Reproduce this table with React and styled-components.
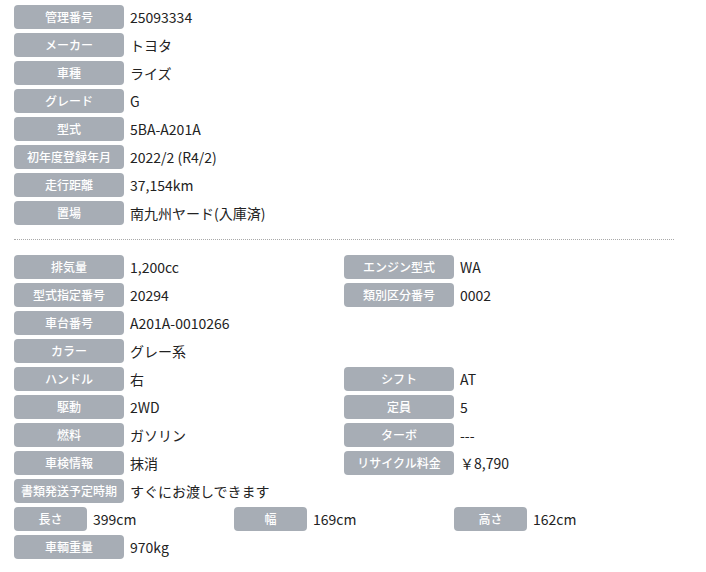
import React from 'react';
import styled, { createGlobalStyle } from 'styled-components';

const GlobalStyle = createGlobalStyle`
  body {
    margin: 0;
    background: #fff;
    font-family: "Noto Sans CJK JP", "Noto Sans", sans-serif;
    color: #222;
  }
`;

const SpecWrapper = styled.div`
  width: 660px;
  padding: 5px 0 0 14px;
`;

const Grid = styled.div`
  display: grid;
  grid-template-columns: repeat(${(p) => p.cols}, 1fr);
  row-gap: 4px;
  margin-top: ${(p) => p.top || 0}px;
`;

const Row = styled.div`
  display: flex;
  align-items: center;
  gap: 6px;
  height: 24px;
`;

const Label = styled.span`
  flex: 0 0 ${(p) => p.width || 110}px;
  height: 24px;
  line-height: 24px;
  border-radius: 4px;
  background: #a7adb5;
  color: #fff;
  font-size: 12px;
  font-weight: 500;
  text-align: center;
  white-space: nowrap;
  overflow: hidden;
`;

const Value = styled.span`
  font-size: 14px;
  line-height: 24px;
  color: #222;
  white-space: nowrap;
`;

const Divider = styled.hr`
  border: none;
  border-top: 1px dotted #a9a9a9;
  margin: 14px 0 15px;
`;

const basic = [
  ['管理番号', '25093334'],
  ['メーカー', 'トヨタ'],
  ['車種', 'ライズ'],
  ['グレード', 'G'],
  ['型式', '5BA-A201A'],
  ['初年度登録年月', '2022/2 (R4/2)'],
  ['走行距離', '37,154km'],
  ['置場', '南九州ヤード(入庫済)'],
];

const detail = [
  ['排気量', '1,200cc'],
  ['エンジン型式', 'WA'],
  ['型式指定番号', '20294'],
  ['類別区分番号', '0002'],
  ['車台番号', 'A201A-0010266'],
  null,
  ['カラー', 'グレー系'],
  null,
  ['ハンドル', '右'],
  ['シフト', 'AT'],
  ['駆動', '2WD'],
  ['定員', '5'],
  ['燃料', 'ガソリン'],
  ['ターボ', '---'],
  ['車検情報', '抹消'],
  ['リサイクル料金', '￥8,790'],
  ['書類発送予定時期', 'すぐにお渡しできます'],
  null,
];

const sizes = [
  ['長さ', '399cm'],
  ['幅', '169cm'],
  ['高さ', '162cm'],
];

const Item = ({ item, width }) =>
  item ? (
    <Row>
      <Label width={width}>{item[0]}</Label>
      <Value>{item[1]}</Value>
    </Row>
  ) : (
    <Row />
  );

const App = () => (
  <>
    <GlobalStyle />
    <SpecWrapper>
      <Grid cols={1}>
        {basic.map((item) => (
          <Item key={item[0]} item={item} />
        ))}
      </Grid>
      <Divider />
      <Grid cols={2}>
        {detail.map((item, i) => (
          <Item key={i} item={item} />
        ))}
      </Grid>
      <Grid cols={3} top={4}>
        {sizes.map((item) => (
          <Item key={item[0]} item={item} width={73} />
        ))}
      </Grid>
      <Grid cols={1} top={4}>
        <Item item={['車輌重量', '970kg']} />
      </Grid>
    </SpecWrapper>
  </>
);

export default App;
